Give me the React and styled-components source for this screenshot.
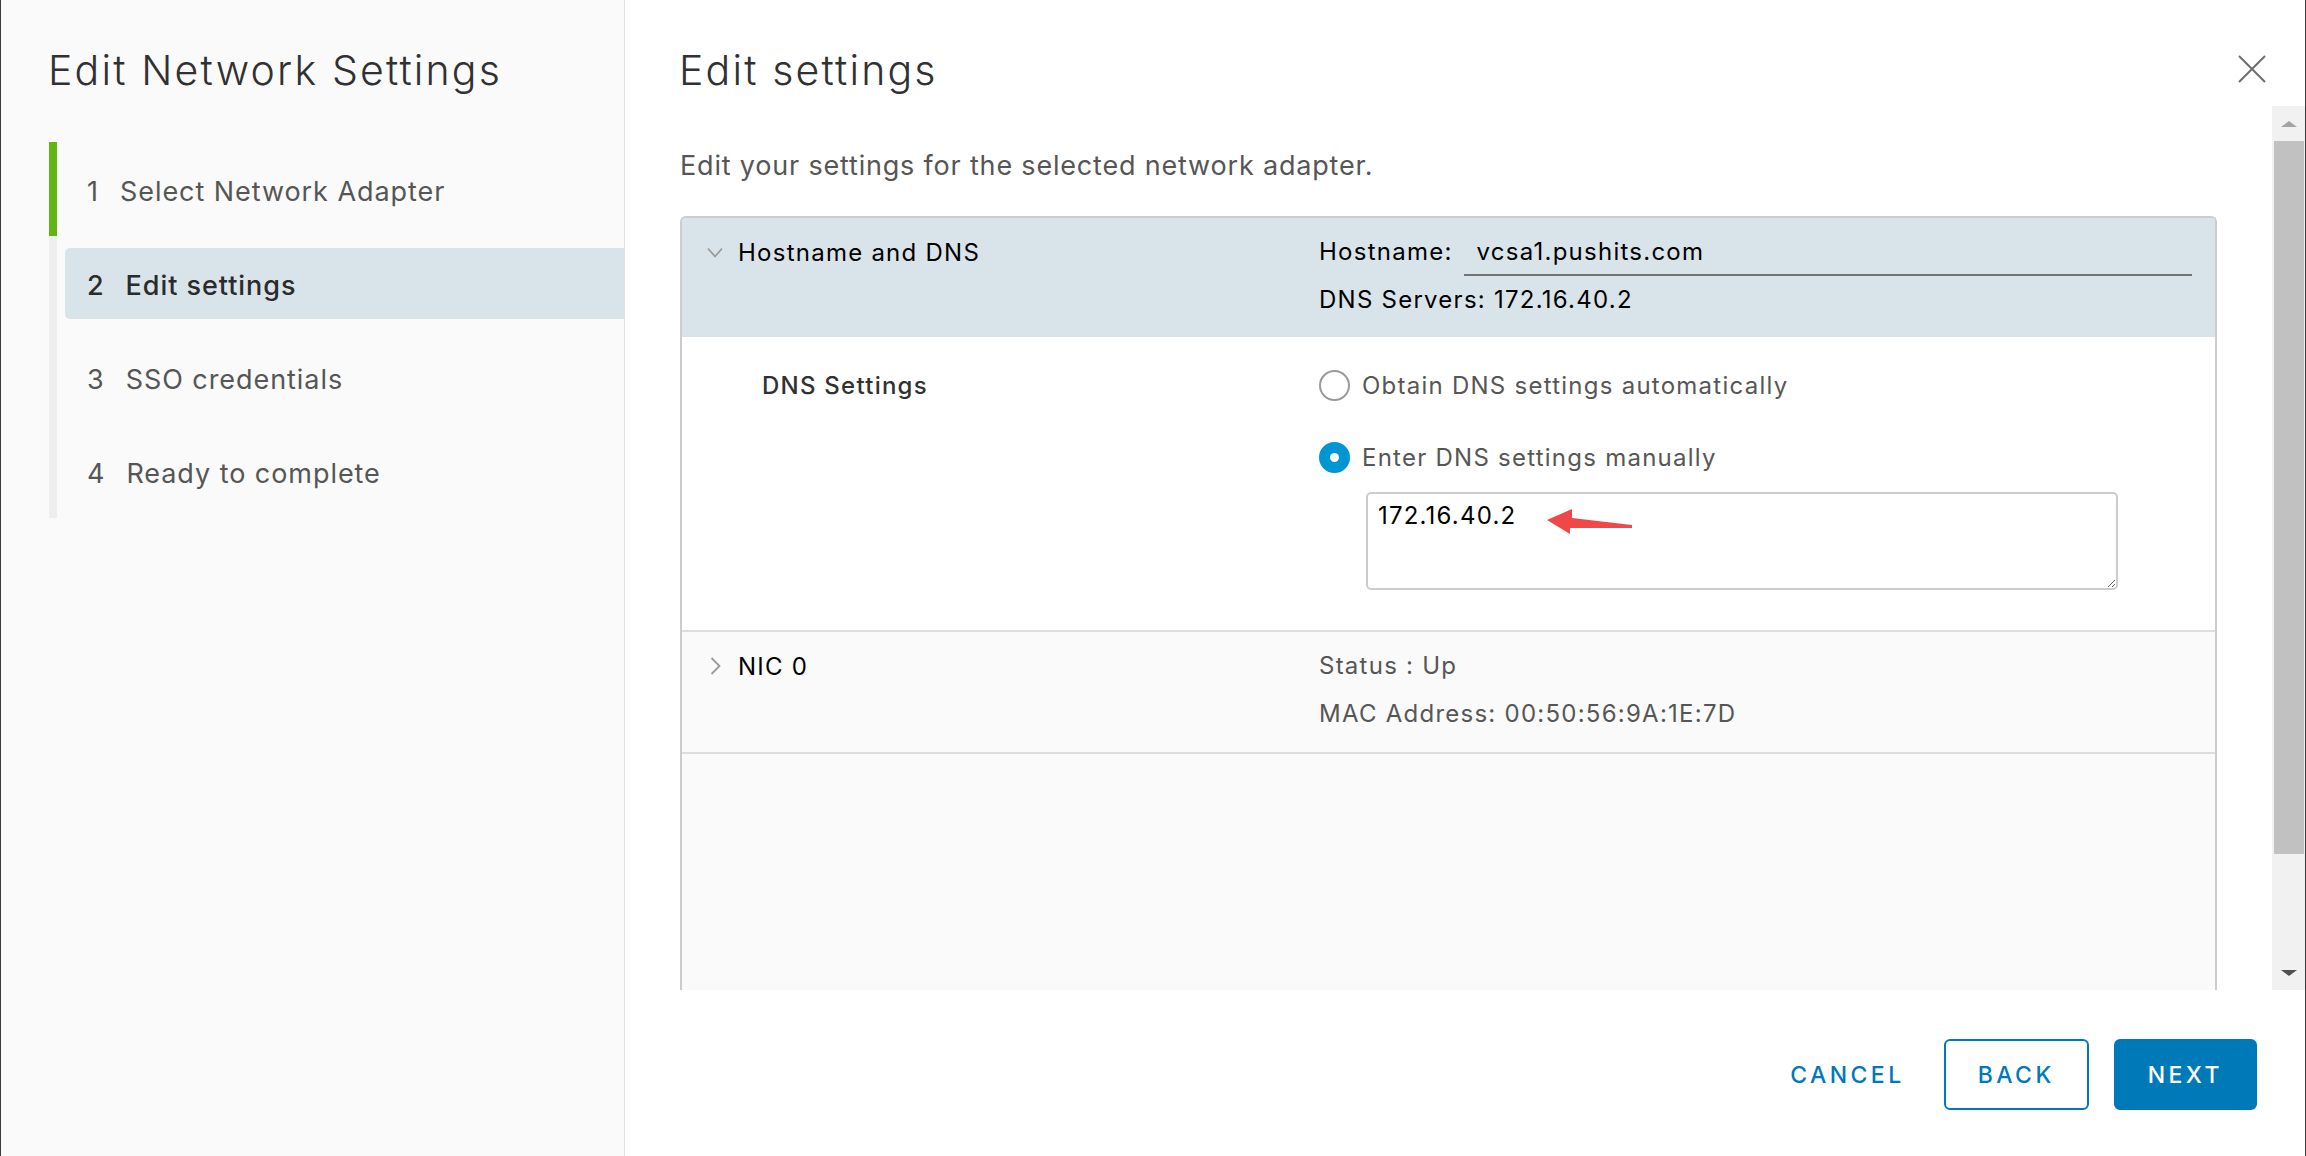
import React from "react";
import styled, { createGlobalStyle, css } from "styled-components";

const FONT = `Inter, Lato, "Liberation Sans", sans-serif`;

const GlobalStyle = createGlobalStyle`
  html, body {
    margin: 0;
    padding: 0;
    background: #ffffff;
  }
  body {
    font-family: ${FONT};
    color: #313131;
  }
  #root {
    height: 100vh;
  }
  * {
    box-sizing: border-box;
  }
`;

const STEPS = [
  { num: 1, label: "Select Network Adapter", state: "done" },
  { num: 2, label: "Edit settings", state: "current" },
  { num: 3, label: "SSO credentials", state: "todo" },
  { num: 4, label: "Ready to complete", state: "todo" },
];

const Modal = styled.div`
  display: flex;
  height: 100vh;
  width: 100%;
  border-left: 1px solid #3c3c3c;
  border-right: 1px solid #3c3c3c;
  background: #ffffff;
  overflow: hidden;
`;

const Sidebar = styled.aside`
  flex: none;
  width: 624px;
  background: #fafafa;
  border-right: 1px solid #e2e2e2;
`;

const WizardTitle = styled.h1`
  margin: 0;
  padding: 45px 0 0 47px;
  font-size: 41px;
  line-height: 50px;
  font-weight: 300;
  letter-spacing: 0.053em;
  color: #313131;
`;

const StepList = styled.ol`
  list-style: none;
  margin: 47px 0 0 48px;
  padding: 0;
`;

const StepItem = styled.li`
  height: 94px;
  display: flex;
  align-items: center;
  border-left: 8px solid ${({ $state }) => ($state === "done" ? "#60b515" : "#eeeeee")};
`;

const StepLink = styled.div`
  flex: 1;
  height: 71px;
  margin-left: 8px;
  padding: 4px 0 0 22px;
  display: flex;
  align-items: center;
  border-radius: 5px 0 0 5px;
  font-size: 27px;
  letter-spacing: 0.035em;
  color: #565656;
  ${({ $current }) =>
    $current &&
    css`
      background: #d9e4ea;
      color: #2b2b2b;
      font-weight: 500;
    `}
`;

const StepNum = styled.span`
  margin-right: 21px;
`;

const Main = styled.section`
  flex: 1;
  min-width: 0;
  display: flex;
  flex-direction: column;
`;

const MainHeader = styled.header`
  flex: none;
  height: 106px;
  display: flex;
  justify-content: space-between;
  align-items: flex-start;
  padding: 45px 39px 0 54px;
`;

const PageTitle = styled.h2`
  margin: 0;
  font-size: 41px;
  line-height: 50px;
  font-weight: 300;
  letter-spacing: 0.053em;
  color: #313131;
`;

const CloseButton = styled.button`
  margin-top: 10px;
  padding: 0;
  border: none;
  background: none;
  width: 28px;
  height: 28px;
  cursor: pointer;
  line-height: 0;
`;

const BodyRow = styled.div`
  flex: 1;
  min-height: 0;
  display: flex;
`;

const Scroller = styled.div`
  flex: 1;
  min-width: 0;
  overflow: hidden;
  padding: 43px 55px 0 55px;
`;

const ScrollTrack = styled.div`
  flex: none;
  width: 33px;
  display: flex;
  flex-direction: column;
  background: #f1f1f1;
`;

const ScrollArrow = styled.div`
  flex: none;
  height: 35px;
  display: flex;
  justify-content: center;
  align-items: center;

  &::before {
    content: "";
    border-left: 8px solid transparent;
    border-right: 8px solid transparent;
    ${({ $dir }) =>
      $dir === "up"
        ? css`
            border-bottom: 6px solid #a3a3a3;
          `
        : css`
            border-top: 6px solid #505050;
          `}
  }
`;

const ScrollThumb = styled.div`
  flex: none;
  height: 713px;
  margin: 0 1px 0 2px;
  background: #c1c1c1;
`;

const ScrollRest = styled.div`
  flex: 1;
`;

const Intro = styled.p`
  margin: 0 0 33px;
  font-size: 27px;
  line-height: 34px;
  letter-spacing: 0.03em;
  color: #565656;
`;

const StackView = styled.div`
  height: 902px;
  border: 2px solid #cccccc;
  border-bottom: none;
  border-radius: 6px 6px 0 0;
  background: #fafafa;
  overflow: hidden;
`;

const StackBlock = styled.div`
  display: grid;
  grid-template-columns: 637px 1fr;
  padding: ${({ $pad }) => $pad || "10px 23px 13px 0"};
  background: ${({ $bg }) => $bg || "#fafafa"};
  border-bottom: ${({ $divider }) => ($divider ? "2px solid #dddddd" : "none")};
  font-size: 24px;
  letter-spacing: 0.052em;
`;

const BlockLabel = styled.div`
  height: 48px;
  display: flex;
  align-items: center;
  gap: 15px;
  padding-left: 25px;
  color: #000000;
`;

const Caret = styled.span`
  width: 16px;
  display: flex;
  justify-content: center;
  align-items: center;
`;

const BlockValues = styled.div`
  display: flex;
  flex-direction: column;
`;

const ValueLine = styled.div`
  height: 48px;
  line-height: 48px;
  display: flex;
  align-items: center;
  color: ${({ $muted }) => ($muted ? "#565656" : "#000000")};
`;

const HostValue = styled.div`
  flex: 1;
  height: 48px;
  margin-left: 11px;
  padding-left: 13px;
  border-bottom: 2px solid #737373;
  color: #000000;
`;

const SubLabel = styled.div`
  height: 40px;
  display: flex;
  align-items: center;
  padding-left: 80px;
  color: #313131;
  font-weight: 500;
`;

const RadioGroup = styled.div`
  display: flex;
  flex-direction: column;
  gap: 32px;
`;

const RadioRow = styled.label`
  height: 40px;
  display: flex;
  align-items: center;
  gap: 12px;
  color: #565656;
`;

const RadioDot = styled.span`
  flex: none;
  width: 31px;
  height: 31px;
  border-radius: 50%;
  display: flex;
  align-items: center;
  justify-content: center;
  ${({ $checked }) =>
    $checked
      ? css`
          background: #0095d3;
          &::after {
            content: "";
            width: 9px;
            height: 9px;
            border-radius: 50%;
            background: #ffffff;
          }
        `
      : css`
          background: #ffffff;
          border: 2px solid #9a9a9a;
        `}
`;

const AreaWrap = styled.div`
  position: relative;
  margin: 15px 0 0 47px;
  width: 752px;
`;

const DnsArea = styled.textarea`
  display: block;
  width: 752px;
  height: 98px;
  padding: 7px 10px;
  border: 2px solid #cccccc;
  border-radius: 5px;
  font-family: ${FONT};
  font-size: 24px;
  letter-spacing: 0.05em;
  color: #000000;
  background: #ffffff;
  outline: none;
  resize: both;
`;

const Annotation = styled.svg`
  position: absolute;
  left: 179px;
  top: 15px;
  pointer-events: none;
`;

const Footer = styled.footer`
  flex: none;
  height: 166px;
  display: flex;
  justify-content: flex-end;
  align-items: center;
  gap: 25px;
  padding: 3px 48px 0 0;
`;

const Button = styled.button`
  height: 71px;
  padding: ${({ $variant }) => ($variant === "flat" ? "0 12px 0 18px" : "0 32px")};
  border-radius: 6px;
  border: 2px solid ${({ $variant }) => ($variant === "flat" ? "transparent" : "#0079b8")};
  background: ${({ $variant }) => ($variant === "primary" ? "#0079b8" : "transparent")};
  color: ${({ $variant }) => ($variant === "primary" ? "#ffffff" : "#0079b8")};
  font-family: ${FONT};
  font-size: 23px;
  font-weight: 500;
  letter-spacing: 0.15em;
  text-transform: uppercase;
  cursor: pointer;
`;

const ChevronDown = () => (
  <svg width="16" height="11" viewBox="0 0 16 11">
    <path d="M1 1.5 L8 9.5 L15 1.5" fill="none" stroke="#9a9a9a" strokeWidth="1.8" />
  </svg>
);

const ChevronRight = () => (
  <svg width="11" height="18" viewBox="0 0 11 18">
    <path d="M1.5 1 L9.5 9 L1.5 17" fill="none" stroke="#9a9a9a" strokeWidth="1.8" />
  </svg>
);

const App = () => {
  return (
    <>
      <GlobalStyle />
      <Modal>
        <Sidebar>
          <WizardTitle>Edit Network Settings</WizardTitle>
          <StepList>
            {STEPS.map((step) => (
              <StepItem key={step.num} $state={step.state}>
                <StepLink $current={step.state === "current"}>
                  <StepNum>{step.num}</StepNum>
                  {step.label}
                </StepLink>
              </StepItem>
            ))}
          </StepList>
        </Sidebar>

        <Main>
          <MainHeader>
            <PageTitle>Edit settings</PageTitle>
            <CloseButton aria-label="Close">
              <svg width="28" height="28" viewBox="0 0 28 28">
                <path d="M1 1 L27 27 M27 1 L1 27" stroke="#6e6e6e" strokeWidth="2" />
              </svg>
            </CloseButton>
          </MainHeader>

          <BodyRow>
            <Scroller>
              <Intro>Edit your settings for the selected network adapter.</Intro>
              <StackView>
                <StackBlock $bg="#d9e4ea">
                  <BlockLabel>
                    <Caret>
                      <ChevronDown />
                    </Caret>
                    Hostname and DNS
                  </BlockLabel>
                  <BlockValues>
                    <ValueLine>
                      Hostname:
                      <HostValue>vcsa1.pushits.com</HostValue>
                    </ValueLine>
                    <ValueLine>DNS Servers: 172.16.40.2</ValueLine>
                  </BlockValues>
                </StackBlock>

                <StackBlock $bg="#ffffff" $pad="28px 23px 40px 0" $divider>
                  <SubLabel>DNS Settings</SubLabel>
                  <div>
                    <RadioGroup>
                      <RadioRow>
                        <RadioDot />
                        Obtain DNS settings automatically
                      </RadioRow>
                      <RadioRow>
                        <RadioDot $checked />
                        Enter DNS settings manually
                      </RadioRow>
                    </RadioGroup>
                    <AreaWrap>
                      <DnsArea defaultValue="172.16.40.2" spellCheck={false} />
                      <Annotation width="90" height="30" viewBox="0 0 90 30">
                        <polygon
                          points="2,13 27,2 27,11 87,18 87,21 25,21 25,27"
                          fill="#f04848"
                        />
                      </Annotation>
                    </AreaWrap>
                  </div>
                </StackBlock>

                <StackBlock $pad="10px 23px 14px 0" $divider>
                  <BlockLabel>
                    <Caret>
                      <ChevronRight />
                    </Caret>
                    NIC 0
                  </BlockLabel>
                  <BlockValues>
                    <ValueLine $muted>Status : Up</ValueLine>
                    <ValueLine $muted>MAC Address: 00:50:56:9A:1E:7D</ValueLine>
                  </BlockValues>
                </StackBlock>
              </StackView>
            </Scroller>
            <ScrollTrack aria-hidden="true">
              <ScrollArrow $dir="up" />
              <ScrollThumb />
              <ScrollRest />
              <ScrollArrow $dir="down" />
            </ScrollTrack>
          </BodyRow>

          <Footer>
            <Button $variant="flat">Cancel</Button>
            <Button $variant="outline">Back</Button>
            <Button $variant="primary">Next</Button>
          </Footer>
        </Main>
      </Modal>
    </>
  );
};

export default App;
